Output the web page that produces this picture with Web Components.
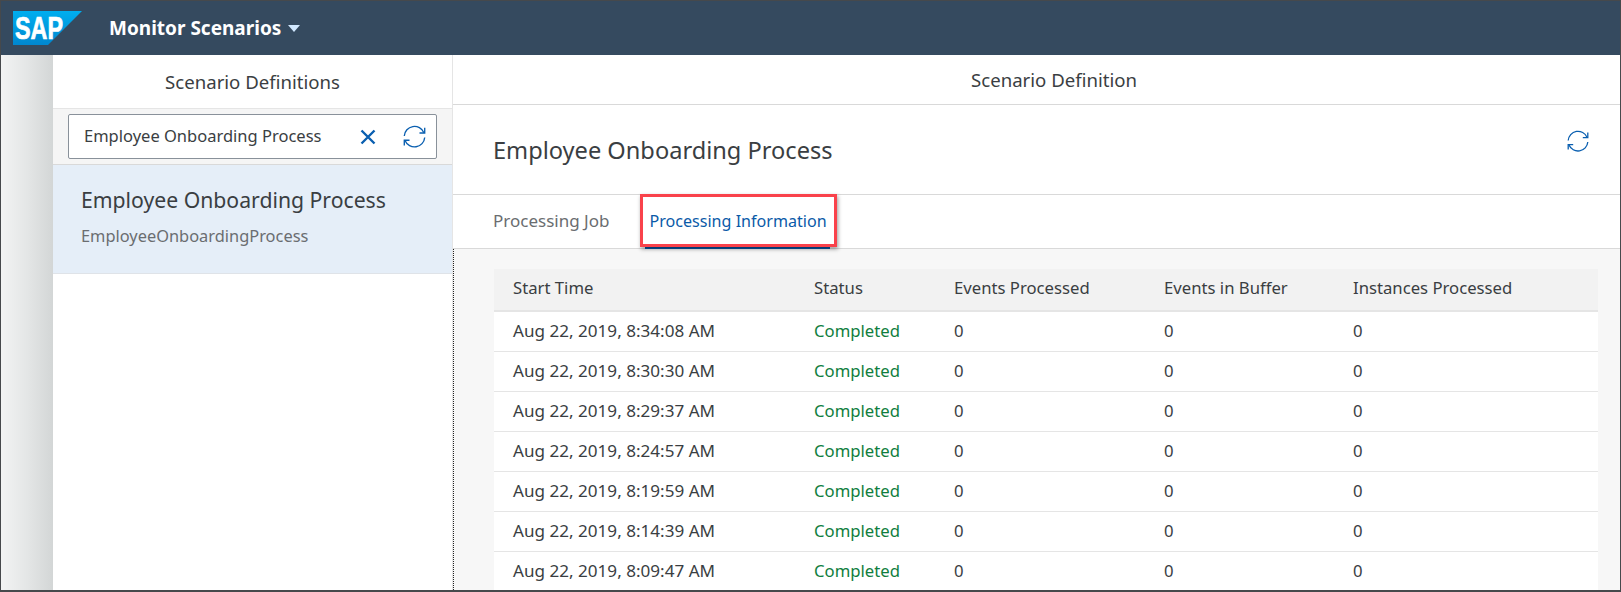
<!DOCTYPE html>
<html lang="en">
<head>
<meta charset="utf-8">
<title>Monitor Scenarios</title>
<style>
  html, body { margin: 0; height: 100%; overflow: hidden; }
  body { font-family: "Noto Sans", "Open Sans", sans-serif; color: #3a3e42; }
</style>
</head>
<body>
<monitor-app>
  <shell-bar slot="top" heading="Monitor Scenarios"></shell-bar>
  <scenario-list slot="left" heading="Scenario Definitions" query="Employee Onboarding Process">
    <scenario-item name="Employee Onboarding Process" code="EmployeeOnboardingProcess"></scenario-item>
  </scenario-list>
  <scenario-detail slot="right" heading="Scenario Definition" name="Employee Onboarding Process">
    <run-table id="runs"></run-table>
  </scenario-detail>
</monitor-app>

<script>
"use strict";

  const refreshSvg = (size) => `
    <svg width="${size}" height="${size}" viewBox="0 0 24 24" fill="none" stroke="#0a5fb0" stroke-width="1.3">
      <path d="M2.2 11.5A9.8 9.8 0 0 1 21 8.3"/>
      <path d="M21.8 13A9.8 9.8 0 0 1 3 16"/>
      <path d="M16.8 8.6H21.8V3.6"/>
      <path d="M7.2 15.6H2.2V20.6"/>
    </svg>`;

  // outer frame of the screenshot: top bar, then grey strip + two panels
  class MonitorApp extends HTMLElement {
    constructor() {
      super();
      const shadow = this.attachShadow({ mode: "open" });
      shadow.innerHTML = `
        <style>
          :host { display: flex; flex-direction: column; box-sizing: border-box; width: 1621px; height: 592px;
                  border: 1px solid #46494c; border-bottom-width: 2px; overflow: hidden; background: #fff; }
          .body { flex: 1; min-height: 0; display: flex; }
          .strip { width: 52px; flex: none; background: linear-gradient(to right, #f2f3f3 0, #e4e6e6 50%, #d3d6d6 100%); }
          .left { width: 400px; flex: none; }
          .right { flex: 1; min-width: 0; }
        </style>
        <slot name="top"></slot>
        <div class="body">
          <div class="strip"></div>
          <div class="left"><slot name="left"></slot></div>
          <div class="right"><slot name="right"></slot></div>
        </div>`;
    }
  }

  class ShellBar extends HTMLElement {
    constructor() {
      super();
      const shadow = this.attachShadow({ mode: "open" });
      shadow.innerHTML = `
        <style>
          :host { display: flex; align-items: center; height: 54px; flex: none; background: #354a5f; padding-left: 12px; color: #fff; }
          svg.logo { display: block; margin-right: 27px; }
          .title { font-size: 19px; font-weight: 700; line-height: 54px; }
          .caret { width: 0; height: 0; margin: 0 0 0 7px; border: 6px solid transparent; border-top: 7px solid #d1e8ff; border-bottom: 0; }
        </style>
        <svg class="logo" width="69" height="34" viewBox="0 0 69 34">
          <defs><linearGradient id="g" x1="0" y1="0" x2="0" y2="1"><stop offset="0" stop-color="#00aeef"/><stop offset="1" stop-color="#0087cf"/></linearGradient></defs>
          <polygon points="0,0 69,0 35,34 0,34" fill="url(#g)"/>
          <text x="2" y="28" font-family="Liberation Sans" font-size="31" font-weight="700" fill="#fff" stroke="#fff" stroke-width=".7" textLength="48" lengthAdjust="spacingAndGlyphs">SAP</text>
        </svg>
        <span class="title">${this.getAttribute("heading")}</span>
        <span class="caret"></span>`;
    }
  }

  class ScenarioList extends HTMLElement {
    constructor() {
      super();
      const shadow = this.attachShadow({ mode: "open" });
      shadow.innerHTML = `
        <style>
          :host { display: flex; flex-direction: column; height: 100%; background: #fff; border-right: 1px solid #e5e5e5; box-sizing: border-box; }
          .head { height: 53px; line-height: 54px; text-align: center; font-size: 18.6px; flex: none; }
          .search { flex: none; height: 57px; box-sizing: border-box; padding: 5px 15px 5px 15px; background: #f5f5f5;
                    border-top: 1px solid #e5e5e5; border-bottom: 1px solid #d9d9d9; }
          .box { display: flex; align-items: center; height: 45px; box-sizing: border-box; padding: 0 9px 0 15px; background: #fff;
                 border: 1px solid #89919a; border-radius: 2px; font-size: 16.5px; }
          .box span { flex: 1; padding-bottom: 2px; }
          .x { margin-right: 26px; display: block; }
        </style>
        <div class="head">${this.getAttribute("heading")}</div>
        <div class="search">
          <div class="box">
            <span>${this.getAttribute("query")}</span>
            <svg class="x" width="16" height="16" viewBox="0 0 16 16" stroke="#0a5fb0" stroke-width="2.4" fill="none"><path d="M1.5 1.5L14.5 14.5M14.5 1.5L1.5 14.5"/></svg>
            ${refreshSvg(25)}
          </div>
        </div>
        <slot></slot>`;
    }
  }

  class ScenarioItem extends HTMLElement {
    constructor() {
      super();
      const shadow = this.attachShadow({ mode: "open" });
      shadow.innerHTML = `
        <style>
          :host { display: block; box-sizing: border-box; height: 109px; padding: 20px 28px 0; background: #e5eef8; border-bottom: 1px solid #dfe3e8; }
          .name { font-size: 21.2px; line-height: 30px; }
          .code { font-size: 16.4px; line-height: 24px; margin-top: 9px; color: #6a6d70; }
        </style>
        <div class="name">${this.getAttribute("name")}</div>
        <div class="code">${this.getAttribute("code")}</div>`;
    }
  }

  class ScenarioDetail extends HTMLElement {
    constructor() {
      super();
      const shadow = this.attachShadow({ mode: "open" });
      shadow.innerHTML = `
        <style>
          :host { display: flex; flex-direction: column; height: 100%; }
          .head { flex: none; height: 49px; line-height: 49px; text-align: center; font-size: 18.6px; padding-left: 35px; border-bottom: 1px solid #d9d9d9; }
          .title { flex: none; height: 89px; display: flex; align-items: center; justify-content: space-between;
                   padding: 0 30px 0 40px; border-bottom: 1px solid #d9d9d9; }
          .title h2 { margin: 0; font-size: 23.6px; font-weight: 400; }
          .title svg { display: block; margin-top: -18px; }
          .tabs { flex: none; height: 53px; display: flex; padding-left: 40px; gap: 36px; border-bottom: 1px solid #d9d9d9; font-size: 17px; line-height: 52px; }
          .tab { color: #6a6d70; }
          .tab.on { color: #0a5aa8; font-size: 16.1px; position: relative; box-shadow: 0 1px 0 #0a55a5, inset 0 -1px 0 #0a55a5; padding: 0 3px 0 4px; }
          /* red annotation drawn over the tab */
          .tab.on::after { content: ""; position: absolute; left: -5px; right: -7px; top: -1px; bottom: 1px; box-sizing: border-box;
                           border: 3px solid #f9424b; box-shadow: 1px 2px 4px rgba(0,0,0,.4); }
          .content { flex: 1; min-height: 0; background: #f7f7f7; padding: 20px 22px 0 40px; border-left: 1px dotted #222; overflow: hidden; }
        </style>
        <div class="head">${this.getAttribute("heading")}</div>
        <div class="title"><h2>${this.getAttribute("name")}</h2>${refreshSvg(24)}</div>
        <div class="tabs"><div class="tab">Processing Job</div><div class="tab on">Processing Information</div></div>
        <div class="content"><slot></slot></div>`;
    }
  }

  class RunTable extends HTMLElement {
    constructor() {
      super();
      const shadow = this.attachShadow({ mode: "open" });
      const runs = ["8:34:08", "8:30:30", "8:29:37", "8:24:57", "8:19:59", "8:14:39", "8:09:47"];
      const cols = "grid-template-columns: 301px 140px 210px 189px 1fr;";
      shadow.innerHTML = `
        <style>
          :host { display: block; font-size: 16.7px; }
          .row { display: grid; ${cols} box-sizing: border-box; padding: 0 0 2px 19px; align-items: center; height: 40px; background: #fff; border-bottom: 1px solid #e5e5e5; }
          .row.head { height: 43px; background: #f2f2f2; border-bottom: 2px solid #e5e5e5; padding-bottom: 5px; }
          .date { font-size: 17.1px; }
          .ok { color: #107e3e; }
        </style>
        <div class="row head"><span>Start Time</span><span>Status</span><span>Events Processed</span><span>Events in Buffer</span><span>Instances Processed</span></div>
        ${runs.map((t) => `
        <div class="row"><span class="date">Aug 22, 2019, ${t} AM</span><span class="ok">Completed</span><span>0</span><span>0</span><span>0</span></div>`).join("")}`;
    }
  }

  window.customElements.define("monitor-app", MonitorApp);
  window.customElements.define("shell-bar", ShellBar);
  window.customElements.define("scenario-list", ScenarioList);
  window.customElements.define("scenario-item", ScenarioItem);
  window.customElements.define("scenario-detail", ScenarioDetail);
  window.customElements.define("run-table", RunTable);
</script>
</body>
</html>
